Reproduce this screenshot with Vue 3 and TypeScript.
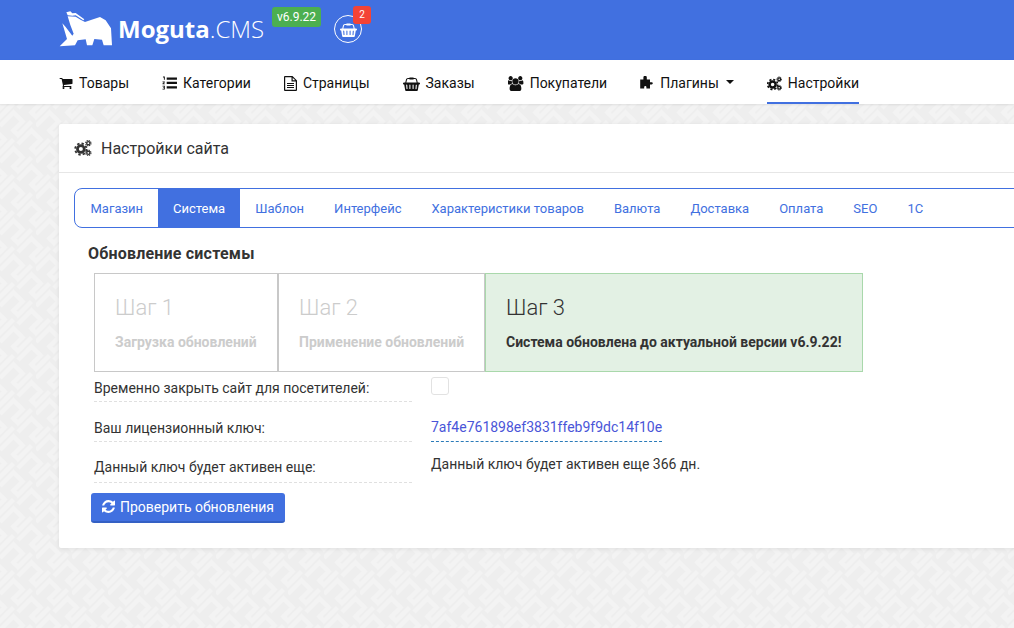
<script setup lang="ts">
const tabs = ['Магазин', 'Система', 'Шаблон', 'Интерфейс', 'Характеристики товаров', 'Валюта', 'Доставка', 'Оплата', 'SEO', '1С']
const steps = [
  { title: 'Шаг 1', text: 'Загрузка обновлений', cls: 'w1' },
  { title: 'Шаг 2', text: 'Применение обновлений', cls: 'w2' },
  { title: 'Шаг 3', text: 'Система обновлена до актуальной версии v6.9.22!', cls: 'w3 done' },
]
const basket = 'M1920 768q53 0 90.5 37.5t37.5 90.5-37.5 90.5-90.5 37.5h-15l-115 662q-8 46-44 76t-82 30h-1280q-46 0-82-30t-44-76l-115-662h-15q-53 0-90.5-37.5t-37.5-90.5 37.5-90.5 90.5-37.5h1795zm-1435 800q26-2 43.5-22.5t15.5-46.5l-32-416q-2-26-22.5-43.5t-46.5-15.5-43.5 22.5-15.5 46.5l32 416q2 25 20.5 42t43.5 17h5zm411-64v-416q0-26-19-45t-45-19-45 19-19 45v416q0 26 19 45t45 19 45-19 19-45zm384 0v-416q0-26-19-45t-45-19-45 19-19 45v416q0 26 19 45t45 19 45-19 19-45zm352 18l32-416q2-26-15.5-46.5t-43.5-22.5-46.5 15.5-22.5 43.5l-32 416q-2 26 15.5 46.5t43.5 22.5h5q25 0 43.5-17t20.5-42zm-1156-1062l-93 412h-132l101-441q19-88 89-143.5t160-55.5h167q0-26 19-45t45-19h384q26 0 45 19t19 45h167q90 0 160 55.5t89 143.5l101 441h-132l-93-412q-11-44-45.5-72t-79.5-28h-167q0 26-19 45t-45 19h-384q-26 0-45-19t-19-45h-167q-45 0-79.5 28t-45.5 72z'
const cart = 'M704 1536q0 52-38 90t-90 38-90-38-38-90 38-90 90-38 90 38 38 90zm896 0q0 52-38 90t-90 38-90-38-38-90 38-90 90-38 90 38 38 90zm128-1088v512q0 24-16.5 42.5t-40.5 21.5l-1044 122q13 60 13 70 0 16-24 64h920q26 0 45 19t19 45-19 45-45 19h-1024q-26 0-45-19t-19-45q0-11 8-31.5t16-36 21.5-40 15.5-29.5l-177-823h-204q-26 0-45-19t-19-45 19-45 45-19h256q16 0 28.5 6.5t19.5 15.5 13 24.5 8 26 5.5 29.5 4.5 26h1201q26 0 45 19t19 45z'
const users = 'M529 896q-162 5-265 128h-134q-82 0-138-40.5t-56-118.5q0-353 124-353 6 0 43.5 21t97.5 42.5 119 21.5q67 0 133-23-5 37-5 66 0 139 81 256zm1071 637q0 120-73 189.5t-194 69.5h-874q-121 0-194-69.5t-73-189.5q0-53 3.5-103.5t14-109 26.5-108.5 43-97.5 62-81 85.5-53.5 111.5-20q10 0 43 21.5t73 48 107 48 135 21.5 135-21.5 107-48 73-48 43-21.5q61 0 111.5 20t85.5 53.5 62 81 43 97.5 26.5 108.5 14 109 3.5 103.5zm-1024-1277q0 106-75 181t-181 75-181-75-75-181 75-181 181-75 181 75 75 181zm704 384q0 159-112.5 271.5t-271.5 112.5-271.5-112.5-112.5-271.5 112.5-271.5 271.5-112.5 271.5 112.5 112.5 271.5zm576 225q0 78-56 118.5t-138 40.5h-134q-103-123-265-128 81-117 81-256 0-29-5-66 66 23 133 23 59 0 119-21.5t97.5-42.5 43.5-21q124 0 124 353zm-128-609q0 106-75 181t-181 75-181-75-75-181 75-181 181-75 181 75 75 181z'
const refresh = 'M1511 928q0 5-1 7-64 268-268 434.5t-478 166.5q-146 0-282.5-55t-243.5-157l-129 129q-19 19-45 19t-45-19-19-45v-448q0-26 19-45t45-19h448q26 0 45 19t19 45-19 45l-137 137q71 66 161 102t187 36q134 0 250-65t186-179q11-17 53-117 8-23 30-23h192q13 0 22.5 9.5t9.5 22.5zm25-800v448q0 26-19 45t-45 19h-448q-26 0-45-19t-19-45 19-45l138-138q-148-137-349-137-134 0-250 65t-186 179q-11 17-53 117-8 23-30 23h-199q-13 0-22.5-9.5t-9.5-22.5v-7q65-268 270-434.5t480-166.5q146 0 284 55.5t245 156.5l130-129q19-19 45-19t45 19 19 45z'
</script>

<template>
  <div class="page">
    <header class="top">
      <svg class="bear" viewBox="12 10 162 108" width="54" height="36" aria-hidden="true">
        <path fill="#fff" d="M34 14 L46 11 L52 17 L62 16 L88 35 L85 38 L62 23 L52 24 L38 23 Z"/>
        <path fill="#fff" d="M38 26 L62 27 L78 37 L90 43 L110 36 L135 28 L152 38 L168 62 L171 113 L146 113 L141 96 L118 94 L112 113 L96 113 L92 95 L68 98 L60 113 L14 116 L36 94 L22 47 L32 58 L52 84 L56 78 L46 52 Z"/>
      </svg>
      <div class="brand"><b>Moguta</b><span>.CMS</span></div>
      <div class="version">v6.9.22</div>
      <div class="basket">
        <svg viewBox="0 0 2048 1792" width="17" height="15" aria-hidden="true"><path fill="#fff" :d="basket"/></svg>
        <span class="count">2</span>
      </div>
    </header>

    <nav class="nav">
      <a class="item">
        <svg viewBox="0 0 1792 1792" width="14" height="14" aria-hidden="true"><path :d="cart"/></svg>Товары
      </a>
      <a class="item">
        <svg viewBox="0 0 16 15" width="15" height="14" aria-hidden="true">
          <path d="M5 1.500h11v2.500H5zM5 6.200h11v2.500H5zM5 11h11v2.500H5z"/>
          <path d="M1 .5h2v3.500H2V1.500H1zM.5 6H3v.8L1.600 8H3v.8H.5V8L2 6.800H.5zM.5 10.500H3v4H.5v-.8H2v-.8H1v-.7h1v-.9H.5z"/>
        </svg>Категории
      </a>
      <a class="item">
        <svg viewBox="0 0 13 15" width="13" height="15" aria-hidden="true">
          <path fill-rule="evenodd" d="M1 0h7.500L13 4.500V14a1 1 0 0 1-1 1H1a1 1 0 0 1-1-1V1a1 1 0 0 1 1-1zm.2 1.200v12.600h10.600V5.500H7.500V1.200zM8.700 1.700v2.600h2.600z"/>
          <path d="M3 7h7v1H3zM3 9h7v1H3zM3 11h7v1H3z"/>
        </svg>Страницы
      </a>
      <a class="item">
        <svg viewBox="0 0 2048 1792" width="17" height="15" aria-hidden="true"><path :d="basket"/></svg>Заказы
      </a>
      <a class="item">
        <svg viewBox="0 0 1920 1792" width="16" height="15" aria-hidden="true"><path :d="users"/></svg>Покупатели
      </a>
      <a class="item">
        <svg viewBox="0 0 14 14" width="14" height="14" aria-hidden="true">
          <path d="M3.400 1.500a1.700 1.700 0 0 1 3.400 0V3.500h3.200v2.700h1.700a1.100 1.100 0 0 1 0 2.200H10V12.500H6.400v-1.500a1.100 1.100 0 0 0-2.200 0v1.500H.2V3.500h3.200z"/>
        </svg>Плагины<i class="caret"></i>
      </a>
      <a class="item active">
        <svg viewBox="0 0 16 15" width="15" height="15" aria-hidden="true">
          <g fill="none" stroke="#111">
            <circle cx="6" cy="8.500" r="3.200" stroke-width="2.600"/>
            <circle cx="6" cy="8.500" r="5.300" stroke-width="1.800" stroke-dasharray="2.200 1.960"/>
            <circle cx="13" cy="3" r="1.500" stroke-width="1.300"/>
            <circle cx="13" cy="3" r="2.500" stroke-width="1" stroke-dasharray="1.200 .76"/>
            <circle cx="13" cy="12" r="1.500" stroke-width="1.300"/>
            <circle cx="13" cy="12" r="2.500" stroke-width="1" stroke-dasharray="1.200 .76"/>
          </g>
        </svg>Настройки
      </a>
    </nav>

    <main class="card">
      <div class="card-head">
        <svg viewBox="0 0 16 15" width="18" height="16" aria-hidden="true">
          <g fill="none" stroke="#333">
            <circle cx="6" cy="8.500" r="3.200" stroke-width="2.600"/>
            <circle cx="6" cy="8.500" r="5.300" stroke-width="1.800" stroke-dasharray="2.200 1.960"/>
            <circle cx="13" cy="3" r="1.500" stroke-width="1.300"/>
            <circle cx="13" cy="3" r="2.500" stroke-width="1" stroke-dasharray="1.200 .76"/>
            <circle cx="13" cy="12" r="1.500" stroke-width="1.300"/>
            <circle cx="13" cy="12" r="2.500" stroke-width="1" stroke-dasharray="1.200 .76"/>
          </g>
        </svg>
        <span>Настройки сайта</span>
      </div>
      <div class="card-body">
        <ul class="tabs">
          <li v-for="(t, i) in tabs" :key="t" :class="['tab', { on: i === 1 }]">{{ t }}</li>
        </ul>
        <h2 class="section">Обновление системы</h2>
        <div class="steps">
          <div v-for="s in steps" :key="s.title" :class="['step', s.cls]">
            <div class="step-title">{{ s.title }}</div>
            <div class="step-text">{{ s.text }}</div>
          </div>
        </div>
        <div class="row r1">
          <label class="lab">Временно закрыть сайт для посетителей:</label>
          <div class="val"><span class="check"></span></div>
        </div>
        <div class="row r2">
          <label class="lab">Ваш лицензионный ключ:</label>
          <div class="val"><a class="key">7af4e761898ef3831ffeb9f9dc14f10e</a></div>
        </div>
        <div class="row r3">
          <label class="lab">Данный ключ будет активен еще:</label>
          <div class="val">Данный ключ будет активен еще 366 дн.</div>
        </div>
        <button class="btn" type="button">
          <svg viewBox="0 0 1536 1536" width="13" height="13" aria-hidden="true"><path fill="#fff" :d="refresh"/></svg>
          Проверить обновления
        </button>
      </div>
    </main>
  </div>
</template>

<style>
html, body { margin: 0; overflow: hidden; }
</style>

<style scoped>
.page {
  width: 1014px;
  height: 628px;
  overflow: hidden;
  font-family: Roboto, "Liberation Sans", sans-serif;
  color: #333;
  background-color: #eeeeee;
  background-image: url("data:image/svg+xml,%3Csvg xmlns='http://www.w3.org/2000/svg' width='36' height='36' viewBox='0 0 48 48'%3E%3Cpath fill='none' stroke='%23f3f3f3' stroke-width='6' d='M0 24l18-18 12 12-12 12 6 6 18-18M24 48l18-18 12 12-12 12 6 6 18-18M24 0l18-18 12 12-12 12 6 6 18-18M-24 0l18-18 12 12-12 12 6 6 18-18M-24 48l18-18 12 12-12 12 6 6 18-18'/%3E%3C/svg%3E");
}
.top {
  height: 60px;
  background: #4170e0;
  display: flex;
  align-items: flex-start;
  padding-left: 59px;
  box-sizing: border-box;
  color: #fff;
}
.bear { margin-top: 11px; flex: none; }
.brand {
  margin: 13px 0 0 5px;
  font-family: "Open Sans", sans-serif;
  font-size: 24px;
  line-height: 32px;
  white-space: nowrap;
  width: 154px;
}
.brand b { font-weight: 700; }
.brand span { font-weight: 300; }
.version {
  background: #4caf50;
  border-radius: 3px;
  width: 49px;
  height: 20px;
  line-height: 20px;
  font-size: 12px;
  text-align: center;
  margin-top: 7px;
}
.basket {
  position: relative;
  width: 28px;
  height: 28px;
  border: 1px solid #fff;
  border-radius: 50%;
  margin: 15px 0 0 13px;
  box-sizing: border-box;
  display: flex;
  align-items: center;
  justify-content: center;
}
.count {
  position: absolute;
  left: 18px;
  top: -10px;
  width: 18px;
  height: 18px;
  background: #f44336;
  border-radius: 3px;
  font-size: 10px;
  line-height: 18px;
  text-align: center;
}
.nav {
  height: 44px;
  background: #fff;
  display: flex;
  gap: 33px;
  padding-left: 59px;
  box-shadow: 0 1px 2px rgba(0, 0, 0, .08);
  position: relative;
}
.item {
  display: flex;
  align-items: center;
  gap: 6px;
  height: 44px;
  box-sizing: border-box;
  padding-top: 2px;
  font-size: 14px;
  color: #111;
}
.item svg { flex: none; fill: #111; }
.item.active { border-bottom: 2px solid #4170e0; padding-top: 4px; }
.caret {
  width: 0;
  height: 0;
  border: 4px solid transparent;
  border-top-color: #111;
  border-bottom: 0;
  margin: 0 0 2px 1px;
}
.card {
  margin: 20px 0 0 59px;
  width: 1000px;
  height: 424px;
  background: #fff;
  box-shadow: 0 1px 4px rgba(0, 0, 0, .08);
  border-radius: 2px;
}
.card-head {
  height: 49px;
  box-sizing: border-box;
  border-bottom: 1px solid #e6e6e6;
  display: flex;
  align-items: center;
  gap: 9px;
  padding-left: 15px;
  font-size: 16px;
}
.card-body { padding: 15px 0 0 15px; }
.tabs {
  list-style: none;
  margin: 0;
  padding: 0;
  height: 40px;
  box-sizing: border-box;
  width: 1100px;
  border: 1px solid #4170e0;
  border-radius: 8px 0 0 8px;
  display: flex;
}
.tab {
  padding: 0 14.5px 0 15.500px;
  height: 38px;
  line-height: 40px;
  font-size: 13px;
  color: #4170e0;
  white-space: nowrap;
}
.tab.on { background: #4170e0; color: #fff; }
.section {
  margin: 16px 0 0 14px;
  font-size: 16px;
  letter-spacing: .2px;
  line-height: 20px;
  font-weight: 700;
  color: #333;
}
.steps { display: flex; margin: 9px 0 0 20px; }
.step {
  height: 99px;
  box-sizing: border-box;
  border: 1px solid #c8c8c8;
  padding: 20px 20px 0;
  color: #ccc;
  background: #fff;
}
.w1 { width: 184px; }
.w2 { width: 207px; }
.w3 { width: 378px; }
.done { background: #e3f1e4; border-color: #a9d8ab; color: #333; }
.step-title { font-size: 22px; line-height: 28px; font-weight: 300; }
.step-text { margin-top: 11px; font-size: 14px; line-height: 18px; font-weight: 700; white-space: nowrap; }
.row {
  display: flex;
  margin-left: 20px;
  font-size: 14px;
}
.r1 { height: 40px; }
.r2 { height: 40px; }
.r3 { height: 41px; }
.lab {
  width: 318px;
  height: 30px;
  box-sizing: border-box;
  border-bottom: 1px dashed #e0e0e0;
  padding-top: 7px;
  line-height: 18px;
  margin-right: 19px;
}
.r3 .lab { height: 31px; padding-top: 6px; }
.val { line-height: 18px; padding-top: 5px; }
.r2 .val { padding-top: 6px; }
.r3 .val { padding-top: 3px; }
.check {
  display: block;
  width: 18px;
  height: 18px;
  box-sizing: border-box;
  border: 1px solid #e2e2e2;
  border-radius: 3px;
}
.key {
  display: inline-block;
  color: #4a55d8;
  border-bottom: 1px dashed #2b7bb9;
  padding-bottom: 5px;
}
.btn {
  display: flex;
  align-items: center;
  gap: 5px;
  margin: 0 0 0 17px;
  height: 30px;
  width: 194px;
  padding: 0 0 1px 11px;
  border: 0;
  border-bottom: 2px solid #3460c4;
  border-radius: 3px;
  background: #4170e0;
  color: #fff;
  font-family: inherit;
  font-size: 14px;
}
</style>
